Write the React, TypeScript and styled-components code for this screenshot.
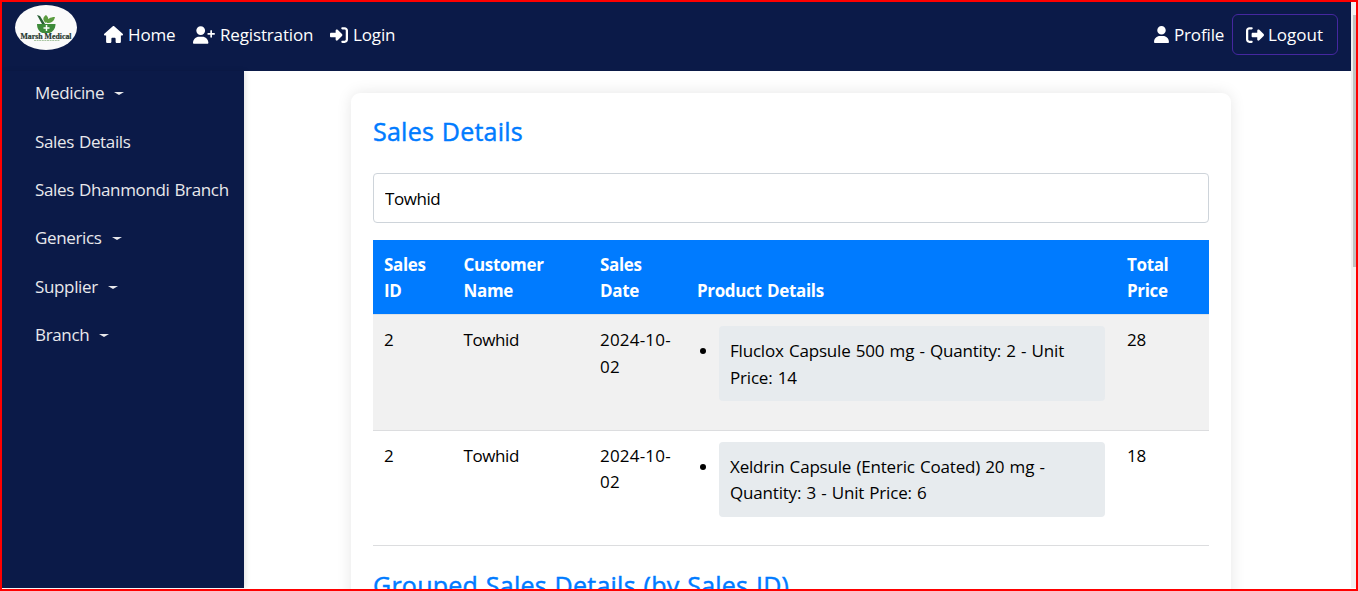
import React from "react";
import styled, { createGlobalStyle } from "styled-components";
import { FaHouse, FaUserPlus, FaRightToBracket, FaUser, FaRightFromBracket } from "react-icons/fa6";

const navy = "#0b1a48";
const blue = "#007bff";

const GlobalStyle = createGlobalStyle`
  * { box-sizing: border-box; }
  body { margin: 0; background: #fff; overflow: hidden; }
`;

const Frame = styled.div`
  width: 1358px;
  height: 591px;
  border: 2px solid #ff0000;
  display: flex;
  overflow: hidden;
  background: #fff;
  color: #000;
  font: 400 17px/26.4px "Open Sans", "Noto Sans", sans-serif;
  letter-spacing: -0.35px;
`;

const Page = styled.div`
  width: 1349px;
  height: 587px;
  display: flex;
  flex-direction: column;
`;

const Header = styled.header`
  height: 69px;
  flex: none;
  background: ${navy};
  color: #fff;
  display: flex;
  align-items: flex-start;
  padding: 3px 13px 0;
  letter-spacing: -0.15px;
`;

const Logo = styled.svg`
  width: 62px;
  height: 45px;
  display: block;
`;

const NavGroup = styled.nav<{ $end?: boolean }>`
  display: flex;
  align-items: center;
  height: 41px;
  margin-top: 9px;
  margin-left: ${(p) => (p.$end ? "auto" : "27px")};
`;

const NavItem = styled.a<{ $gap: number; $width?: number }>`
  display: flex;
  align-items: center;
  gap: ${(p) => p.$gap}px;
  width: ${(p) => (p.$width ? p.$width + "px" : "auto")};
  white-space: nowrap;
  svg { flex: none; }
`;

const NavLabel = styled.span`
  padding-top: 1px;
`;

const LogoutButton = styled(NavItem)`
  height: 41px;
  width: 106px;
  padding-left: 13px;
  border: 1px solid #4527a0;
  border-radius: 6px;
  letter-spacing: 0;
`;

const Body = styled.div`
  flex: 1;
  min-height: 0;
  display: flex;
`;

const Sidebar = styled.aside`
  width: 242px;
  height: 517px;
  flex: none;
  background: ${navy};
  box-shadow: 2px 0 5px rgba(0, 0, 0, 0.1);
  padding: 9.3px 0 0 33px;
  word-spacing: 0.9px;
`;

const SideLink = styled.a`
  display: flex;
  align-items: center;
  height: 26.4px;
  margin-bottom: 22px;
  color: #e9e9ec;
  white-space: nowrap;
`;

const Caret = styled.span`
  margin-left: 10px;
  border: 5px solid transparent;
  border-top: 3px solid #e9e9ec;
  border-bottom: 0;
`;

const Main = styled.main`
  flex: 1;
  padding: 22px 120px 0 107px;
  overflow: hidden;
`;

const Card = styled.section`
  height: 700px;
  padding: 21px 22px;
  background: #fff;
  border-radius: 9px;
  box-shadow: 0 0 15px rgba(0, 0, 0, 0.1);
`;

const Title = styled.h2`
  margin: 0;
  height: 59px;
  color: ${blue};
  font-size: 25px;
  font-weight: 500;
  line-height: 34px;
  letter-spacing: 0.24px;
  word-spacing: 1px;
  -webkit-text-stroke: 0.45px ${blue};
`;

const SearchInput = styled.input`
  display: block;
  width: 100%;
  height: 50px;
  padding: 1px 11px 0;
  border: 1px solid #ced4da;
  border-radius: 4px;
  font: inherit;
  letter-spacing: -0.45px;
  color: #000;
  outline: none;
`;

const Table = styled.table`
  width: 836px;
  margin: 17px 0 22px;
  table-layout: fixed;
  border-collapse: separate;
  border-spacing: 0;
`;

const HeadCell = styled.th<{ $width: number }>`
  width: ${(p) => p.$width}px;
  height: 75px;
  padding: 0 11px 10px;
  background: ${blue};
  border-bottom: 1px solid #dee2e6;
  color: #fff;
  font-weight: 700;
  line-height: 26px;
  letter-spacing: -0.35px;
  word-spacing: 1.5px;
  text-align: left;
  vertical-align: bottom;
`;

const Cell = styled.td<{ $spacing?: number }>`
  padding: 12px 11px 0;
  border-bottom: 1px solid #dcdddf;
  vertical-align: top;
  letter-spacing: ${(p) => p.$spacing ?? -0.4}px;
`;

const ProductList = styled.ul`
  margin: -1px 0 0;
  padding: 0 0 0 22px;
`;

const Product = styled.li`
  height: 75px;
  padding: 12px 11px 0;
  background: #e7ebee;
  border-radius: 4px;
  white-space: nowrap;
  word-spacing: 1px;
`;

const Row = styled.tr<{ $striped?: boolean; $height: number }>`
  height: ${(p) => p.$height}px;
  background: ${(p) => (p.$striped ? "#f1f1f1" : "#fff")};
  line-height: ${(p) => (p.$striped ? 27 : 26)}px;
  ${Cell} { padding-top: ${(p) => (p.$striped ? 11 : 12)}px; }
  ${ProductList} { margin-top: ${(p) => (p.$striped ? 0 : -1)}px; }
  ${Product} { padding-top: ${(p) => (p.$striped ? 11 : 12)}px; }
`;

const ScrollTrack = styled.div`
  width: 5px;
  height: 586px;
  padding: 13px 0 0 2px;
  background: #f1f1f1;
`;

const ScrollThumb = styled.div`
  height: 252px;
  background: #c1c1c1;
`;

const columns = [
  { width: 79.5, lines: ["Sales", "ID"] },
  { width: 136.5, lines: ["Customer", "Name"] },
  { width: 97, lines: ["Sales", "Date"] },
  { width: 430, lines: ["Product Details"] },
  { width: 93, lines: ["Total", "Price"] },
];

const sales = [
  { height: 116, product: ["Fluclox Capsule 500 mg - Quantity: 2 - Unit", "Price: 14"], total: 28 },
  { height: 115, product: ["Xeldrin Capsule (Enteric Coated) 20 mg -", "Quantity: 3 - Unit Price: 6"], total: 18 },
];

const menu = [
  { label: "Medicine", open: true },
  { label: "Sales Details" },
  { label: "Sales Dhanmondi Branch" },
  { label: "Generics", open: true },
  { label: "Supplier", open: true },
  { label: "Branch", open: true },
];

const Lines = ({ items }: { items: string[] }) => (
  <>
    {items.map((line, i) => (
      <React.Fragment key={line}>
        {i > 0 && <br />}
        {line}
      </React.Fragment>
    ))}
  </>
);

const MarshLogo = () => (
  <Logo viewBox="0 0 62 45">
    <ellipse cx="31" cy="22.5" rx="31" ry="22.5" fill="#fafafa" />
    <path d="M22 19h18.500c0 5-3 8-6 9h-7c-3-1-5.500-4-5.500-9z" fill="#3e8b3a" />
    <path d="M22 10l3 1 5 8h-3z" fill="#295f35" />
    <path d="M31 18c-4-3-3-6 0-8 3 3 3 5 0 8zM32 18c0-4 3-6 8-6-1 4-3 6-8 6z" fill="#5b9c3f" />
    <path d="M31.500 20v6M28.500 23h6" stroke="#fff" strokeWidth="1.500" />
    <text x="31" y="33.500" textAnchor="middle" textLength="51" lengthAdjust="spacingAndGlyphs" fontFamily="Liberation Serif, serif" fontSize="8.500" fontWeight="700" letterSpacing="0" fill="#25372e" stroke="#25372e" strokeWidth="0.200">Marsh Medical</text>
    <path d="M19 35.500h26" stroke="#a9c6a2" strokeWidth="1" strokeDasharray="2 .6" />
  </Logo>
);

export default function App() {
  return (
    <Frame>
      <GlobalStyle />
      <Page>
        <Header>
          <MarshLogo />
          <NavGroup>
            <NavItem $gap={5} $width={89}><FaHouse size={19} /><NavLabel>Home</NavLabel></NavItem>
            <NavItem $gap={5} $width={137}><FaUserPlus size={22} /><NavLabel>Registration</NavLabel></NavItem>
            <NavItem $gap={5}><FaRightToBracket size={18} /><NavLabel>Login</NavLabel></NavItem>
          </NavGroup>
          <NavGroup $end>
            <NavItem $gap={4} $width={79}><FaUser size={17} /><NavLabel>Profile</NavLabel></NavItem>
            <LogoutButton $gap={4}><FaRightFromBracket size={18} /><NavLabel>Logout</NavLabel></LogoutButton>
          </NavGroup>
        </Header>
        <Body>
          <Sidebar>
            {menu.map((m) => (
              <SideLink key={m.label}>{m.label}{m.open && <Caret />}</SideLink>
            ))}
          </Sidebar>
          <Main>
            <Card>
              <Title>Sales Details</Title>
              <SearchInput defaultValue="Towhid" />
              <Table>
                <thead>
                  <tr>
                    {columns.map((c) => (
                      <HeadCell key={c.lines.join(" ")} $width={c.width}><Lines items={c.lines} /></HeadCell>
                    ))}
                  </tr>
                </thead>
                <tbody>
                  {sales.map((s, i) => (
                    <Row key={s.total} $height={s.height} $striped={i % 2 === 0}>
                      <Cell>2</Cell>
                      <Cell>Towhid</Cell>
                      <Cell $spacing={0.2}><Lines items={["2024-10-", "02"]} /></Cell>
                      <Cell $spacing={-0.19}><ProductList><Product><Lines items={s.product} /></Product></ProductList></Cell>
                      <Cell $spacing={-0.2}>{s.total}</Cell>
                    </Row>
                  ))}
                </tbody>
              </Table>
              <Title>Grouped Sales Details (by Sales ID)</Title>
            </Card>
          </Main>
        </Body>
      </Page>
      <ScrollTrack><ScrollThumb /></ScrollTrack>
    </Frame>
  );
}
